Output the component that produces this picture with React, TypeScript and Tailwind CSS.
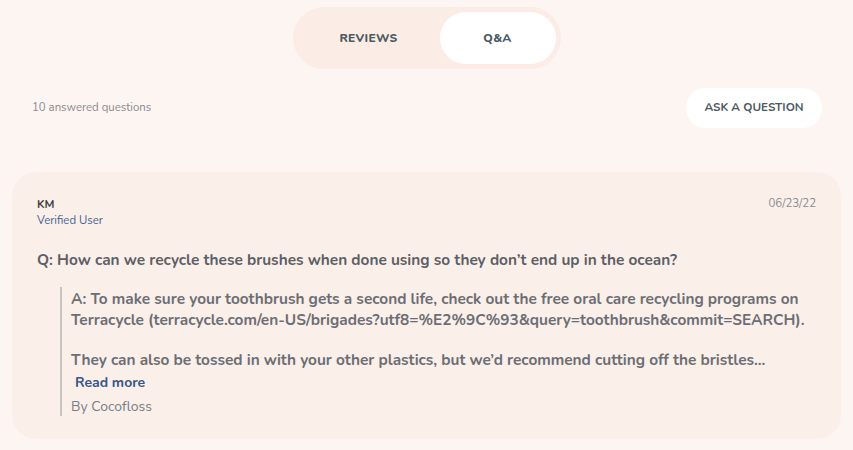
import React, { useState } from 'react';

const FONT = { fontFamily: '"Nunito", "Lato", "Noto Sans", sans-serif' };

export default function App() {
  const [tab, setTab] = useState<'reviews' | 'qa'>('qa');

  return (
    <div className="min-h-[450px] w-full bg-[#fdf5f1] text-[#5c5f66]" style={FONT}>
      {/* Tabs */}
      <div className="flex justify-center pt-[7px]">
        <div className="flex h-[62px] w-[268px] items-center rounded-full bg-[#fbece5] p-[5px]">
          <button
            onClick={() => setTab('reviews')}
            className={`flex h-[52px] flex-1 items-center justify-center rounded-full text-[12px] font-extrabold tracking-wide text-[#4b5a63] ${tab === 'reviews' ? 'bg-white' : ''}`}
          >
            REVIEWS
          </button>
          <button
            onClick={() => setTab('qa')}
            className={`flex h-[52px] w-[116px] items-center justify-center rounded-full text-[12px] font-extrabold tracking-wide text-[#4b5a63] ${tab === 'qa' ? 'bg-white' : ''}`}
          >
            Q&amp;A
          </button>
        </div>
      </div>

      {/* Count + ask */}
      <div className="mt-[19px] flex items-center justify-between pl-[32px] pr-[31px]">
        <span className="text-[11.4px] text-[#8a8a8e]">10 answered questions</span>
        <button className="h-[40px] w-[136px] rounded-full bg-white text-[11.7px] font-bold text-[#4b5a63]">
          ASK A QUESTION
        </button>
      </div>

      {/* Question card */}
      <div className="mx-[12px] mt-[44px] rounded-[24px] bg-[#fbefea] px-[25px] pb-[23px] pt-[25px]">
        <div className="flex items-start justify-between">
          <div className="flex flex-col">
            <span className="text-[11.4px] font-bold leading-[14px] text-[#3c3c40]">KM</span>
            <span className="mt-[2px] text-[11.4px] leading-[14px] text-[#3f6291]">Verified User</span>
          </div>
          <span className="mt-[-1px] text-[11.4px] leading-[14px] text-[#8a8a8e]">06/23/22</span>
        </div>

        <p className="mt-[23px] text-[15.4px] font-bold leading-[20px] text-[#5c5f66]">
          Q: How can we recycle these brushes when done using so they don’t end up in the ocean?
        </p>

        <div className="ml-[23px] mt-[17px] border-l-2 border-[#c9c3c0] pl-[9px]">
          <p className="pt-[1px] text-[15.4px] font-bold leading-[21px] text-[#6b6e74]">
            A: To make sure your toothbrush gets a second life, check out the free oral care recycling programs on
            Terracycle (terracycle.com/en-US/brigades?utf8=%E2%9C%93&amp;query=toothbrush&amp;commit=SEARCH).
          </p>
          <p className="mt-[19px] text-[15.4px] font-bold leading-[21px] text-[#6b6e74]">
            They can also be tossed in with your other plastics, but we’d recommend cutting off the bristles...
          </p>
          <button className="ml-[4px] mt-[-1px] text-[14px] font-bold leading-[17px] text-[#34568b]">Read more</button>
          <p className="mt-[4px] text-[14px] leading-[18px] text-[#7a7c80]">By Cocofloss</p>
        </div>
      </div>
    </div>
  );
}
